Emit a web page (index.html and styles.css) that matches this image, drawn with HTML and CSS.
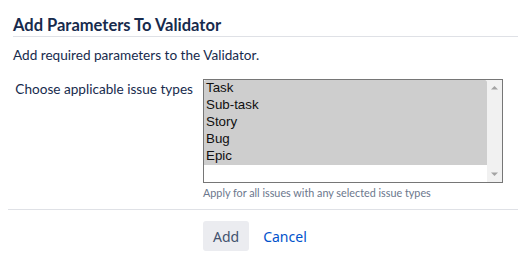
FILE: index.html
```html
<!DOCTYPE html>
<html lang="en">
<head>
  <meta charset="UTF-8">
  <title>Add Parameters To Validator</title>
  <link rel="stylesheet" href="styles.css">
</head>
<body>

  <!-- Dialog -->
  <section class="dialog">
    <header class="dialog-header">
      <h2>Add Parameters To Validator</h2>
    </header>

    <p class="dialog-desc">Add required parameters to the Validator.</p>

    <div class="field-row">
      <label class="field-label" for="issue-types">Choose applicable issue types</label>
      <div class="field-control">
        <div class="listbox">
          <select id="issue-types" class="multi-select" multiple>
            <option selected>Task</option>
            <option selected>Sub-task</option>
            <option selected>Story</option>
            <option selected>Bug</option>
            <option selected>Epic</option>
          </select>
          <!-- fake scrollbar, the list never scrolls -->
          <div class="scrollbar">
            <svg width="15" height="15" viewBox="0 0 15 15"><path d="M4 9.5 L7.5 6 L11 9.5 Z" fill="#a3a3a3"/></svg>
            <svg width="15" height="15" viewBox="0 0 15 15"><path d="M4 5.5 L7.5 9 L11 5.5 Z" fill="#a3a3a3"/></svg>
          </div>
        </div>
        <div class="field-help">Apply for all issues with any selected issue types</div>
      </div>
    </div>

    <footer class="dialog-footer">
      <button class="btn" type="button">Add</button>
      <a href="#" class="btn-link">Cancel</a>
    </footer>
  </section>

</body>
</html>
```

FILE: styles.css
```css
/* Global Styles */
body {
  margin: 0;
  padding: 0;
  background-color: #fff;
  color: #172b4d;
  font-family: Lato, "Noto Sans", sans-serif;
  font-size: 13.6px;
}

.dialog {
  padding-left: 8px;
}

.dialog-header {
  margin-left: 5px;
  padding: 15px 0 1px;
  border-bottom: 1px solid #dfe1e6;
}

.dialog-header h2 {
  margin: 0;
  font-size: 16.5px;
  line-height: 20px;
  font-weight: bold;
  color: #172b4d;
}

.dialog-desc {
  margin: 8px 0 0 5px;
  line-height: 20px;
}

/* Form row */
.field-row {
  display: flex;
  margin-top: 14px;
}

.field-label {
  width: 185px;
  text-align: right;
  line-height: 20px;
  padding-right: 10px;
  white-space: nowrap;
}

.listbox {
  display: flex;
  width: 298px;
  height: 102px;
  border: 1px solid #767676;
}

.multi-select {
  flex: 1;
  display: block;
  height: 100%;
  margin: 0;
  padding: 0;
  border: 0;
  outline: none;
  font-family: "Liberation Sans", Arial, sans-serif;
  font-size: 13.33px;
  color: #000;
  overflow: hidden;
}

.multi-select option {
  padding: 0 2px 1px;
}

.scrollbar {
  width: 15px;
  background-color: #f1f1f1;
  display: flex;
  flex-direction: column;
  justify-content: space-between;
}

.scrollbar svg {
  display: block;
}

.field-help {
  margin-top: 3px;
  font-size: 10.8px;
  line-height: 14px;
  color: #6b778c;
}

/* Footer */
.dialog-footer {
  display: flex;
  align-items: center;
  margin-top: 9px;
  padding: 11px 0 0 195px;
  border-top: 1px solid #dfe1e6;
}

.btn {
  height: 30px;
  padding: 0 10px;
  border: 0;
  border-radius: 3px;
  background-color: #ebecf0;
  color: #42526e;
  font-family: "Noto Sans", sans-serif;
  font-size: 14px;
}

.btn-link {
  margin-left: 14px;
  color: #0052cc;
  text-decoration: none;
  font-family: "Noto Sans", sans-serif;
  font-size: 14px;
}
```
